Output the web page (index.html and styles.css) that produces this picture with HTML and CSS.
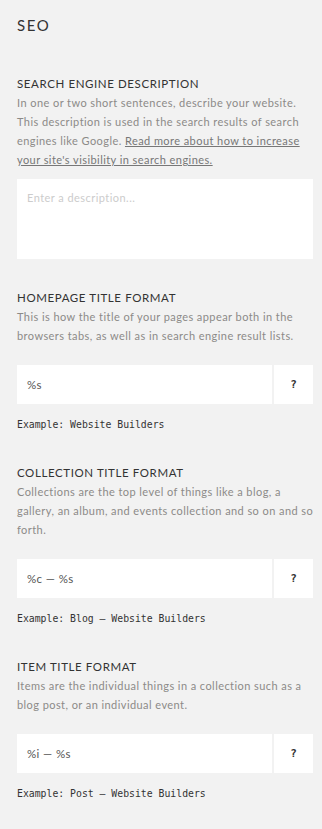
FILE: index.html
```html
<!DOCTYPE html>
<html lang="en">
<head>
  <meta charset="UTF-8">
  <meta name="viewport" content="width=device-width, initial-scale=1.0">
  <title>SEO Settings</title>
  <link rel="stylesheet" href="styles.css">
</head>
<body>
  <div class="panel">
    <h1 class="panel-title">SEO</h1>

    <div class="field">
      <h2 class="field-label">Search Engine Description</h2>
      <p class="field-help tight">In one or two short sentences, describe your website. This description is used in the search results of search engines like Google. <a href="#">Read more about how to increase your site's visibility in search engines.</a></p>
      <textarea class="description" placeholder="Enter a description..."></textarea>
    </div>

    <div class="field">
      <h2 class="field-label">Homepage Title Format</h2>
      <p class="field-help">This is how the title of your pages appear both in the browsers tabs, as well as in search engine result lists.</p>
      <div class="format-row">
        <input class="format-input" type="text" value="%s">
        <button class="help-btn">?</button>
      </div>
      <div class="example">Example: Website Builders</div>
    </div>

    <div class="field">
      <h2 class="field-label">Collection Title Format</h2>
      <p class="field-help">Collections are the top level of things like a blog, a gallery, an album, and events collection and so on and so forth.</p>
      <div class="format-row">
        <input class="format-input" type="text" value="%c — %s">
        <button class="help-btn">?</button>
      </div>
      <div class="example">Example: Blog — Website Builders</div>
    </div>

    <div class="field">
      <h2 class="field-label">Item Title Format</h2>
      <p class="field-help">Items are the individual things in a collection such as a blog post, or an individual event.</p>
      <div class="format-row">
        <input class="format-input" type="text" value="%i — %s">
        <button class="help-btn">?</button>
      </div>
      <div class="example">Example: Post — Website Builders</div>
    </div>
  </div>
</body>
</html>
```

FILE: styles.css
```css
body {
  margin: 0;
  padding: 0;
  background: #f2f2f2;
  font-family: 'Lato', 'Noto Sans', sans-serif;
  color: #333;
}

.panel {
  padding: 15px 9px 30px 17px;
}

.panel-title {
  margin: 0 0 39px;
  font-size: 15px;
  line-height: 20px;
  font-weight: 400;
  letter-spacing: 1.6px;
  color: #333;
}

.field {
  margin-bottom: 29px;
}

.field-label {
  margin: 0;
  font-size: 11.5px;
  line-height: 19px;
  font-weight: 400;
  text-transform: uppercase;
  letter-spacing: 0.6px;
  color: #333;
}

.field-help {
  margin: 0 -2px 20.5px 0;
  font-size: 11px;
  line-height: 19px;
  letter-spacing: 0.43px;
  color: #8c8a88;
}

.field-help.tight {
  margin-bottom: 9.5px;
}

.field-help a {
  color: #777;
  text-decoration: underline;
}

.description {
  display: block;
  box-sizing: border-box;
  width: 100%;
  height: 80px;
  padding: 12px 10px;
  border: none;
  background: white;
  font-family: inherit;
  font-size: 11px;
  letter-spacing: 0.45px;
  resize: none;
}

.description::placeholder {
  color: #ccc;
}

.format-row {
  display: flex;
  gap: 2px;
  height: 39px;
}

.format-input {
  flex: 1;
  min-width: 0;
  box-sizing: border-box;
  padding: 0 10px;
  border: none;
  background: white;
  font-family: inherit;
  font-size: 11.5px;
  letter-spacing: 0.4px;
  color: #555;
}

.help-btn {
  width: 39px;
  border: none;
  background: white;
  font-family: 'DejaVu Sans Mono', monospace;
  font-size: 11px;
  font-weight: bold;
  color: #333;
  padding: 0;
}

.example {
  margin-top: 10.5px;
  font-family: 'DejaVu Sans Mono', monospace;
  font-size: 9.8px;
  line-height: 19px;
  color: #333;
}
```
